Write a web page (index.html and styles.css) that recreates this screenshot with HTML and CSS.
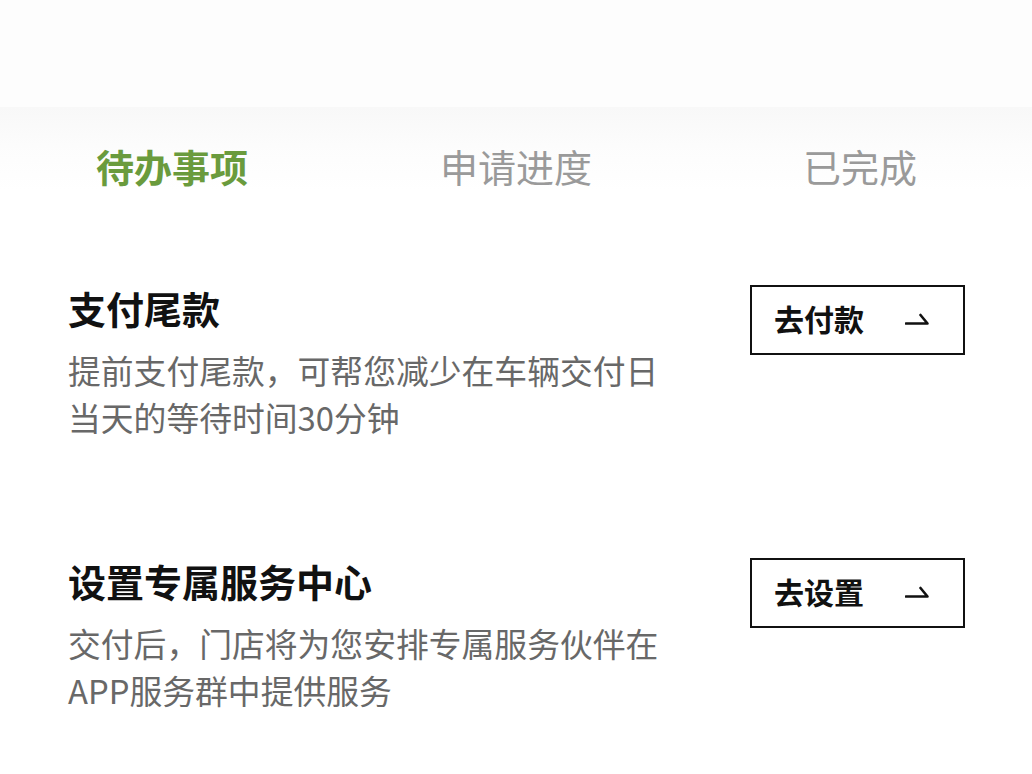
FILE: index.html
```html
<!DOCTYPE html>
<html lang="zh-CN">
<head>
<meta charset="utf-8">
<link rel="stylesheet" href="styles.css">
</head>
<body>
<div class="page">
  <div class="header"></div>
  <div class="band"></div>
  <nav class="tabs">
    <div class="tab active">待办事项</div>
    <div class="tab">申请进度</div>
    <div class="tab">已完成</div>
  </nav>
  <main class="list">
    <section class="item">
      <div class="info">
        <h2 class="title">支付尾款</h2>
        <p class="desc">提前支付尾款，可帮您减少在车辆交付日<br>当天的等待时间30分钟</p>
      </div>
      <button class="action">
        <span class="label">去付款</span>
        <svg class="arrow" width="24" height="12" viewBox="0 0 24 12"><path d="M1 10.5 H22.5 L15.5 2" fill="none" stroke="#111" stroke-width="2.6" stroke-linecap="round" stroke-linejoin="round"/></svg>
      </button>
    </section>
    <section class="item">
      <div class="info">
        <h2 class="title">设置专属服务中心</h2>
        <p class="desc">交付后，门店将为您安排专属服务伙伴在<br>APP服务群中提供服务</p>
      </div>
      <button class="action">
        <span class="label">去设置</span>
        <svg class="arrow" width="24" height="12" viewBox="0 0 24 12"><path d="M1 10.5 H22.5 L15.5 2" fill="none" stroke="#111" stroke-width="2.6" stroke-linecap="round" stroke-linejoin="round"/></svg>
      </button>
    </section>
  </main>
</div>
</body>
</html>
```
FILE: styles.css
```css
* { box-sizing: border-box; }
html, body {
  margin: 0;
  padding: 0;
  background: #ffffff;
}
body {
  font-family: "Noto Sans CJK SC", "Noto Sans", sans-serif;
  width: 1032px;
  height: 774px;
  overflow: hidden;
}
.header {
  height: 107px;
  background: #fdfdfd;
}
.band {
  height: 38px;
  background: linear-gradient(#f8f8f8, #fcfcfc);
}
.tabs {
  display: grid;
  grid-template-columns: 1fr 1fr 1fr;
  height: 46px;
  background: linear-gradient(#fcfcfc, #ffffff);
}
.tab {
  text-align: center;
  font-size: 38px;
  line-height: 42px;
  color: #9a9a9a;
}
.tab.active {
  color: #6a9b3d;
  font-weight: 700;
}
.list {
  padding: 94px 67px 0 68px;
  display: flex;
  flex-direction: column;
  gap: 118px;
}
.item {
  display: flex;
  justify-content: space-between;
  align-items: flex-start;
}
.title {
  margin: -2px 0 0 0;
  font-size: 38px;
  line-height: 50px;
  font-weight: 700;
  color: #111;
}
.desc {
  margin: 13px 0 0 0;
  font-size: 32.8px;
  line-height: 47px;
  color: #686868;
}
.action {
  width: 215px;
  height: 70px;
  border: 2px solid #111;
  background: #fff;
  padding: 0 34px 0 22px;
  display: flex;
  align-items: center;
  justify-content: space-between;
  font-family: inherit;
  cursor: pointer;
}
.label {
  font-size: 30px;
  font-weight: 700;
  color: #111;
  line-height: 40px;
  margin-top: -4px;
}
.arrow {
  display: block;
  margin-top: -2px;
}
```
